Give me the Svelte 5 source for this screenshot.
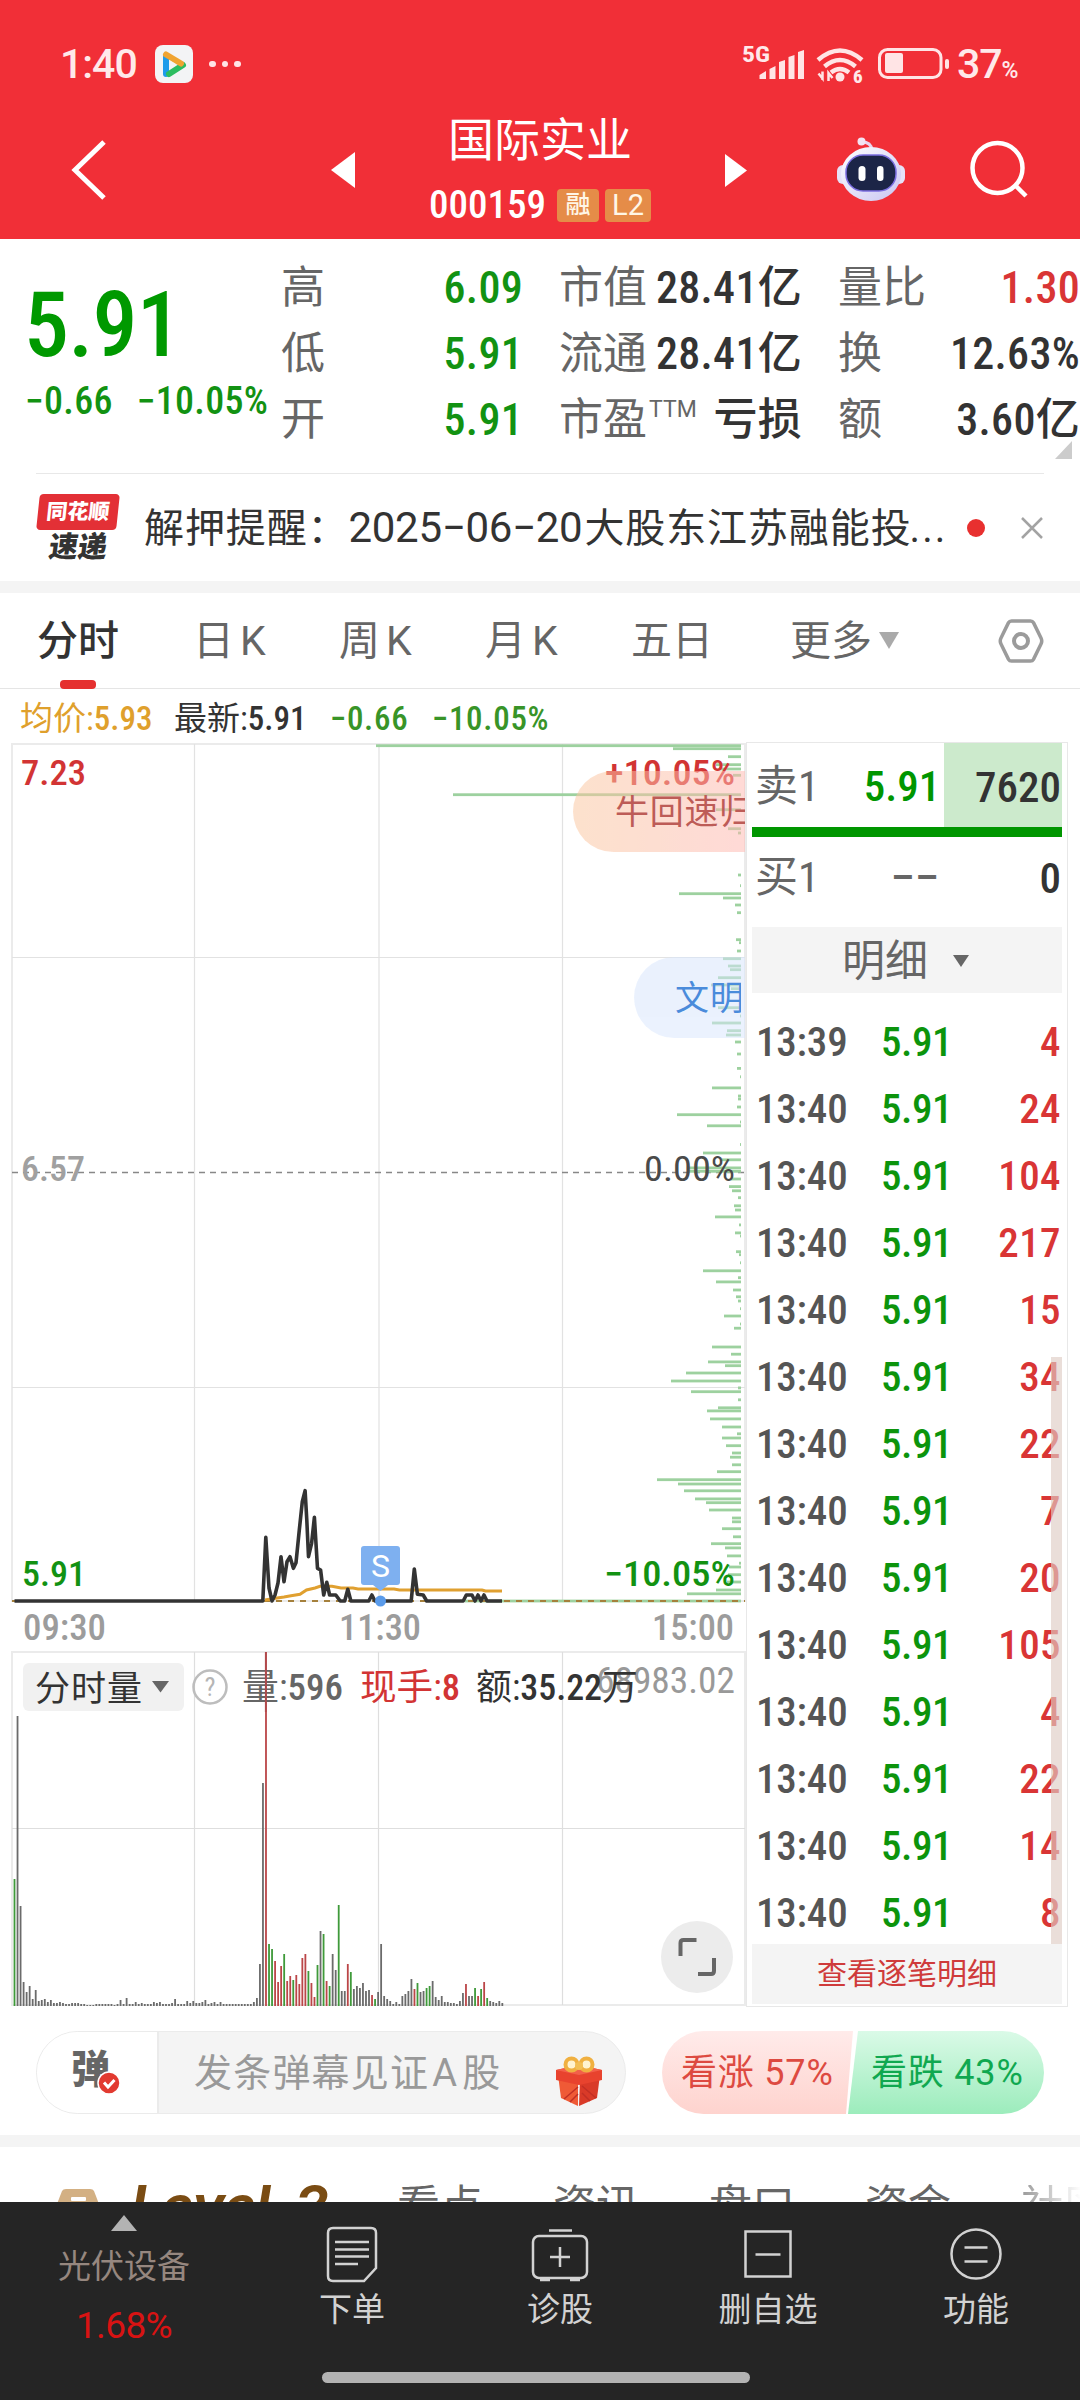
<script>
  const quotes = [
    { label: "高", value: "6.09", tone: "down" },
    { label: "市值", value: "28.41亿" },
    { label: "量比", value: "1.30", tone: "up" },
    { label: "低", value: "5.91", tone: "down" },
    { label: "流通", value: "28.41亿" },
    { label: "换", value: "12.63%" },
    { label: "开", value: "5.91", tone: "down" },
    { label: "市盈", sup: "TTM", value: "亏损" },
    { label: "额", value: "3.60亿" },
  ];

  const periods = ["日K", "周K", "月K", "五日"];

  const ticks = [
    ["13:39", 4],
    ["13:40", 24],
    ["13:40", 104],
    ["13:40", 217],
    ["13:40", 15],
    ["13:40", 34],
    ["13:40", 22],
    ["13:40", 7],
    ["13:40", 20],
    ["13:40", 105],
    ["13:40", 4],
    ["13:40", 22],
    ["13:40", 14],
    ["13:40", 8],
  ];

  // queue depth per price level: [y, length]
  const depth = [
    [745.7, 365], [748.7, 68], [756.7, 13], [764.7, 25], [769, 22], [775.3, 8],
    [794.7, 288], [809.7, 25], [828.7, 13], [833, 3], [875, 3], [885.7, 1],
    [893.7, 62], [898, 18], [905, 6], [912.7, 4], [939.7, 5], [942.7, 2],
    [951, 4], [958.7, 18], [966, 13], [969.7, 11], [977.7, 23], [985, 30],
    [988.7, 10], [1007.7, 23], [1016, 1], [1023, 29], [1030.7, 14], [1035, 15],
    [1042, 6], [1054, 4], [1068.4, 4], [1076.8, 1], [1087.9, 29], [1096, 3],
    [1099, 3], [1107, 4], [1114.7, 64], [1122, 1], [1125.8, 34], [1144.5, 1],
    [1153, 38], [1159.8, 19], [1167.9, 52], [1171.3, 52], [1179, 10], [1186.6, 12],
    [1190.8, 9], [1197.7, 3], [1205.8, 7], [1210, 6], [1216.9, 26], [1224.9, 2],
    [1232.9, 6], [1236, 1], [1251.7, 5], [1254.7, 2], [1262.8, 1], [1270.8, 38],
    [1277.7, 3], [1281.9, 25], [1290, 8], [1296.8, 5], [1301, 3], [1308.7, 1],
    [1316, 17], [1324, 1], [1328.2, 7], [1347, 29], [1354.2, 10], [1361.9, 33],
    [1365.7, 16], [1373, 55], [1381, 70], [1387.9, 3], [1391.7, 50], [1399.8, 3],
    [1407.8, 23], [1410.9, 34], [1418.9, 31], [1427, 19], [1433.8, 4], [1438, 19],
    [1445.7, 15], [1453, 9], [1457.2, 11], [1464.8, 9], [1471.7, 24], [1479.7, 84],
    [1484, 63], [1490.8, 57], [1498.9, 46], [1502.7, 35], [1510, 32], [1518, 9],
    [1521.8, 9], [1528.7, 19], [1536.8, 8], [1543.7, 30], [1547.9, 16], [1555.9, 14],
    [1563.2, 2], [1567, 12], [1574.7, 13], [1582, 14], [1590, 25], [1593.8, 54],
    [1601, 276],
  ];

  const pricePoints =
    "14.5,1601 262.8,1601 265.8,1537.3 269,1588 272,1601 275,1595 278,1583 281,1556.7 284,1581.7 287,1561.7 290,1556.7 293.4,1568.3 296,1562.7 299.3,1530 302.3,1501.7 305.1,1490.7 306.8,1520 308.5,1556.7 311.6,1543.3 314.4,1517.3 317.5,1568.3 320.6,1570 323.7,1595 326.8,1582.3 329.6,1595 335.8,1595 340.2,1601 344.7,1601 347.8,1589.3 350.9,1601 368.8,1601 371.9,1595 375,1601 411.2,1601 414.3,1569 417.4,1594.3 423.2,1595 426.7,1601 463.2,1601 466.3,1595 472,1595 475,1601 478,1595 481,1601 484,1595 487,1601 502,1601";

  const avgPoints =
    "265,1600 275.5,1598.3 284,1597 291,1595.7 300,1594.3 306.5,1590 315,1588 320,1586.3 332,1586.3 341,1588 353,1588 358,1589 394,1589 399.5,1590 482,1590 485.5,1591 502,1591";

  // one bar a minute, g = falling, r = rising
  const volume = (
    "127g 290 100 24 14 20 7 16 5 6 7 4 6 3 3 4 3 2 2 3 3 3 2 2 1 1 1 2 2 2 2 2 2 1 2 6 2 8 2 2 " +
    "4 2 3 2 2 2 4 3 4 2 2 2 3 7 2 2 2 5 3 5 3 3 4 6 2 3 4 2 4 2 2 2 2 2 2 2 2 2 2 4 8 " +
    "42 223 354r 62g 57g 45r 24r 40r 52g 25r 30r 26g 31r 22r 48r 52r 35g 23r 9r 41g 75 72g 25r 20g 52 36 101g 15 15 " +
    "42r 34g 17 20 18 23 15 16 11r 7g 14 62 10 7 5 2 4 2 10 12 15 27 17r 23g 14 15 18g 20g 25 9 6 10 4 4 3 3 2 5 13 " +
    "22r 10 10 18g 10r 17g 24r 8g 5 4 3 5 3"
  )
    .split(" ")
    .map((item, i) => ({
      x: 14.5 + i * 3.03,
      h: parseInt(item),
      fill: item.endsWith("g") ? "#3f9a3a" : item.endsWith("r") ? "#bb4648" : "#6b6b6b",
    }));
</script>

<div class="page">
  <header>
    <div class="status">
      <span class="clock">1:40</span>
      <svg class="app-icon" viewBox="0 0 38 38">
        <rect width="38" height="38" rx="8" fill="#f3f4f5" />
        <path d="M11 12v17" stroke="#1e9bea" stroke-width="6" stroke-linecap="round" />
        <path d="M14 29l14-9" stroke="#2cbd60" stroke-width="6" stroke-linecap="round" />
        <path d="M11 9.500l15 9" stroke="#f0a431" stroke-width="6" stroke-linecap="round" />
        <path d="M14 15l7 4.500-7 4.500z" fill="#f3f4f5" />
      </svg>
      <span class="dots"><i></i><i></i><i></i></span>
      <svg class="signals" viewBox="740 42 212 44">
        <text x="742" y="61.500" font-size="22" font-weight="700" fill="#ffe9ea" textLength="28" lengthAdjust="spacingAndGlyphs">5G</text>
        <g fill="#ffe4e5">
          <path d="M759.500 79v-4l6.500-4v8zM769.500 79V69l6-3v13zM779 79V62l6-2v19zM788.500 79V57l6-2v24zM798 79V52l6-2v29z" />
          <circle cx="840" cy="77" r="4.500" />
          <rect x="885" y="53" width="18" height="20" rx="2" />
          <rect x="945" y="59" width="4" height="10" rx="2" />
        </g>
        <g fill="none" stroke="#ffe4e5" stroke-width="4.500">
          <path d="M818 60q22-19 44 0M824.500 66.500q15.500-13 31 0M831 72.500q9-7 18 0" />
          <rect x="879.500" y="49.500" width="61.500" height="28" rx="8" stroke-width="3" />
        </g>
        <path d="M818.500 73.500l4 5v-7M822.500 80v-8M828.500 81v-8l4 5" stroke="#ffe4e5" stroke-width="2.500" fill="none" />
        <text x="853" y="82.500" font-size="19" font-weight="800" fill="#ffe9ea">6</text>
      </svg>
      <span class="battery">37<small>%</small></span>
    </div>

    <div class="title-bar">
      <svg class="back" viewBox="0 0 36 62"><path d="M33 3L4 31l29 28" fill="none" stroke="#fff" stroke-width="5" /></svg>
      <svg class="prev" viewBox="0 0 24 36"><path d="M24 0v36L0 18z" fill="#fff" /></svg>
      <div class="stock">
        <h1>国际实业</h1>
        <div class="code"><b>000159</b><em class="tag">融</em><em class="tag l2">L2</em></div>
      </div>
      <svg class="next" viewBox="0 0 24 36"><path d="M0 0v36l24-18z" fill="#fff" /></svg>
      <svg class="robot" viewBox="0 0 68 64">
        <defs>
          <linearGradient id="shell" x1="0" y1="0" x2="1" y2="1">
            <stop offset="0" stop-color="#fff" />
            <stop offset="1" stop-color="#c9c5f2" />
          </linearGradient>
        </defs>
        <path d="M25 5q9 0 10 8" fill="none" stroke="#e9d5ee" stroke-width="3" />
        <circle cx="24.500" cy="4.500" r="4" fill="#f3e3f2" />
        <rect x="0" y="28" width="68" height="19" rx="6" fill="#e6e2f8" />
        <ellipse cx="34" cy="37" rx="30" ry="27" fill="url(#shell)" />
        <rect x="9" y="18" width="50" height="36" rx="17" fill="#1c2547" stroke="#7b6ee0" stroke-width="1.500" />
        <rect x="21.500" y="29" width="7" height="15" rx="3.500" fill="#fff" />
        <rect x="40" y="29" width="6.500" height="15" rx="3.200" fill="#fff" />
      </svg>
      <svg class="search" viewBox="0 0 60 60">
        <circle cx="27.500" cy="28" r="25" fill="none" stroke="#fff" stroke-width="4.500" />
        <path d="M45 45l11 11" stroke="#fff" stroke-width="4.500" />
      </svg>
    </div>
  </header>

  <section class="quote">
    <div class="price">
      <strong>5.91</strong>
      <div class="change"><span>−0.66</span><span>−10.05%</span></div>
    </div>
    <dl>
      {#each quotes as q}
        <div class="cell">
          <dt>{q.label}{#if q.sup}<sup>{q.sup}</sup>{/if}</dt>
          <dd class={q.tone}>{q.value}</dd>
        </div>
      {/each}
    </dl>
    <i class="corner"></i>
  </section>

  <section class="news">
    <div class="news-logo">
      <span class="brand">同花顺</span>
      <span class="express">速递</span>
    </div>
    <p>解押提醒：<span>2025−06−20</span>大股东江苏融能投<span class="more">...</span></p>
    <i class="unread"></i>
    <svg class="close" viewBox="0 0 22 22"><path d="M1 1l20 20M21 1L1 21" stroke="#a3a3a3" stroke-width="2.500" /></svg>
  </section>

  <nav class="periods">
    <span class="active">分时</span>
    {#each periods as p}
      <span class:k={p.endsWith("K")}>{p}</span>
    {/each}
    <span class="drop">更多<i></i></span>
    <svg viewBox="0 0 46 46">
      <path d="M13.500 3h19q2 0 3 1.700L43 20q1.500 3 0 6l-7.500 15.300q-1 1.700-3 1.700h-19q-2 0-3-1.700L3 26q-1.500-3 0-6l7.500-15.300Q11.500 3 13.500 3z" fill="none" stroke="#9b9b9b" stroke-width="3.500" />
      <circle cx="23" cy="23" r="7" fill="none" stroke="#9b9b9b" stroke-width="4" />
    </svg>
  </nav>

  <div class="summary">
    <span class="avg">均价:<b>5.93</b></span>
    <span class="last">最新:<b>5.91</b></span>
    <b class="fall">−0.66</b>
    <b class="fall">−10.05%</b>
  </div>

  <main>
    <svg class="chart" viewBox="0 742 746 1265" width="746" height="1265">
      <defs>
        <linearGradient id="warm" x1="0" x2="1">
          <stop offset="0" stop-color="#fbc7a0" />
          <stop offset="1" stop-color="#ffb9b2" />
        </linearGradient>
      </defs>
      <g fill="none" stroke="#ebebeb" stroke-width="2">
        <rect x="12" y="744" width="733" height="857" />
        <rect x="12" y="1652" width="733" height="353" />
        <path d="M194.500 744v857M379 744v857M562.500 744v857M12 957.500h733M12 1387.500h733" stroke="#e2e2e2" stroke-width="1.200" />
        <path d="M194.500 1652v353M378.500 1652v353M562.500 1652v353M12 1828.500h733" stroke="#dedede" stroke-width="1.200" />
      </g>
      <path d="M12 1172.500h733" stroke="#888" stroke-width="1.600" stroke-dasharray="6 5" />

      {#each depth as [y, len]}
        <rect x={741 - len} y={y - 1.4} width={len} height="2.800" fill="#9dd19f" />
      {/each}
      <path d="M12 1601h733" stroke="#a5803c" stroke-width="1.800" stroke-dasharray="6 6" />

      <polyline points={avgPoints} fill="none" stroke="#e0a030" stroke-width="3" />
      <polyline points={pricePoints} fill="none" stroke="#333" stroke-width="3.600" stroke-linejoin="round" />

      <g font-size="35" font-weight="500">
        <text x="21" y="785" fill="#d23434" textLength="65" lengthAdjust="spacingAndGlyphs">7.23</text>
        <text x="605" y="785" fill="#d23434" textLength="130" lengthAdjust="spacingAndGlyphs">+10.05%</text>
        <text x="21" y="1181" fill="#a0a0a0" textLength="64" lengthAdjust="spacingAndGlyphs">6.57</text>
        <text x="644" y="1181" fill="#4a4a4a" font-weight="400" textLength="91" lengthAdjust="spacingAndGlyphs">0.00%</text>
        <text x="22" y="1586" fill="#129212" textLength="64" lengthAdjust="spacingAndGlyphs">5.91</text>
        <text x="604" y="1586" fill="#129212" textLength="131" lengthAdjust="spacingAndGlyphs">−10.05%</text>
      </g>
      <g font-size="36" fill="#9c9c9c" font-weight="500">
        <text x="23" y="1640" textLength="83" lengthAdjust="spacingAndGlyphs">09:30</text>
        <text x="339" y="1640" textLength="82" lengthAdjust="spacingAndGlyphs">11:30</text>
        <text x="652" y="1640" textLength="82" lengthAdjust="spacingAndGlyphs">15:00</text>
      </g>

      <g opacity="0.52">
        <path d="M745 771H613.500a40.500 40.500 0 0 0 0 81H745z" fill="url(#warm)" />
        <path d="M745 957H674.500a40.500 40.500 0 0 0 0 81H745z" fill="#d8e6fd" />
      </g>
      <svg x="573" y="742" width="172" height="300" viewBox="573 742 172 300">
        <text class="cn" x="615" y="824" font-size="34" fill="#bd5c57" letter-spacing=".7">牛回速归</text>
      </svg>
      <svg x="573" y="940" width="168" height="100" viewBox="573 940 168 100">
        <text class="cn" x="675" y="1010" font-size="34" fill="#4a8bdb" letter-spacing="1">文明</text>
      </svg>

      <rect x="361" y="1546" width="39" height="39" rx="3" fill="#7eb0f0" />
      <path d="M373 1585h15l-7.500 6z" fill="#7eb0f0" />
      <text class="wide" x="380.500" y="1577" text-anchor="middle" font-size="32" fill="#fff">S</text>
      <circle cx="380.500" cy="1601" r="5.500" fill="#5a9bea" />

      {#each volume as bar}
        <rect x={bar.x - 0.9} y={2006 - bar.h} width="1.800" height={bar.h} fill={bar.fill} />
      {/each}

      <rect x="23" y="1663" width="161" height="48" rx="6" fill="#f1f1f1" />
      <text class="cn" x="35" y="1701" font-size="35" fill="#333" textLength="107">分时量</text>
      <path d="M152 1681h17l-8.500 11.500z" fill="#666" />
      <circle cx="210" cy="1687" r="16.500" fill="none" stroke="#bdbdbd" stroke-width="2.500" />
      <text x="210" y="1696" text-anchor="middle" font-size="26" fill="#b5b5b5">?</text>
      <g font-size="36">
        <text x="596" y="1693" fill="#999" textLength="139" lengthAdjust="spacingAndGlyphs">68983.02</text>
        <text x="242" y="1700" fill="#666" textLength="101" lengthAdjust="spacingAndGlyphs">量:<tspan font-weight="500">596</tspan></text>
        <text x="360" y="1700" fill="#d23434" textLength="100" lengthAdjust="spacingAndGlyphs">现手:<tspan font-weight="500">8</tspan></text>
        <text x="476" y="1700" fill="#333" textLength="162" lengthAdjust="spacingAndGlyphs">额:<tspan font-weight="500">35.22</tspan>万</text>
      </g>
      <path d="M265.800 1652v60" stroke="#b04a4c" stroke-width="1.800" />

      <circle cx="697" cy="1957" r="36" fill="#ececec" />
      <path d="M680.500 1956v-13q0-3 3-3h13M714 1958v13q0 3-3 3h-13" fill="none" stroke="#666" stroke-width="4" />
    </svg>

    <aside>
      <div class="level sell">
        <span>卖1</span><b>5.91</b><em>7620</em>
      </div>
      <div class="ratio"></div>
      <div class="level buy">
        <span>买1</span><b class="none">−−</b><em>0</em>
      </div>
      <div class="detail-head">明细<i></i></div>
      <ul>
        {#each ticks as [time, qty]}
          <li><span>{time}</span><b>5.91</b><em>{qty}</em></li>
        {/each}
        <i class="thumb"></i>
      </ul>
      <div class="detail-link">查看逐笔明细</div>
    </aside>
  </main>

  <section class="talk">
    <div class="bullet">
      <span class="toggle">弹
        <svg viewBox="0 0 24 24">
          <circle cx="12" cy="12" r="11" fill="#e23a30" stroke="#fff" stroke-width="1.500" />
          <path d="M7 11.500l4 4.500 6.500-7" fill="none" stroke="#fff" stroke-width="3" />
        </svg>
      </span>
      <span class="hint">发条弹幕见证<i>A</i>股</span>
      <svg class="gift" viewBox="0 0 46 50">
        <path d="M2 19l20 6v25L5 42z" fill="#ef5a36" />
        <path d="M44 19l-20 6-1 25 18-8z" fill="#d93a28" />
        <path d="M0 14l23-5 23 5v10l-23 5-23-5z" fill="#e8432e" />
        <path d="M0 14l23-5 23 5-23 5z" fill="#f2604a" />
        <path d="M8 43l14-12M14 46l8-8M40 42L26 30M34 45l-8-8" stroke="#c22f24" stroke-width="1.500" />
        <circle cx="15.500" cy="8.500" r="6" fill="#fff3d0" stroke="#f0b040" stroke-width="4" />
        <circle cx="30.500" cy="8.500" r="6" fill="#fff3d0" stroke="#f0b040" stroke-width="4" />
        <circle cx="23" cy="10" r="4" fill="#f3bf55" />
      </svg>
    </div>
    <div class="poll">
      <span class="bull">看涨 57%</span>
      <span class="bear">看跌 43%</span>
    </div>
  </section>

  <nav class="sections">
    <svg viewBox="0 0 42 40"><path d="M9 1h24q3 0 4 2l5 13v24H0V16L5 3q1-2 4-2z" fill="#d3b083" /><rect x="14" y="9" width="15" height="4" rx="1" fill="#fff" /></svg>
    <strong>Level-2</strong>
    <span>看点</span>
    <span>资讯</span>
    <span>盘口</span>
    <span>资金</span>
    <span class="faded">社区</span>
  </nav>

  <footer>
    <div class="tabs">
      <div class="sector">
        <i></i>
        <span>光伏设备</span>
        <b>1.68%</b>
      </div>
      <div class="tab">
        <svg viewBox="0 0 60 60">
          <path d="M11 3h38q5 0 5 5v35L42 56H11q-5 0-5-5V8q0-5 5-5z" />
          <path d="M13 17h34M13 24.500h34M13 31.500h34M13 39h23" />
        </svg>
        <span>下单</span>
      </div>
      <div class="tab">
        <svg viewBox="0 0 60 60">
          <rect x="3" y="11" width="54" height="42" rx="6" />
          <path d="M19 5.500h23M30 22v20M20 32h20M10 55h10M40 55h10" />
        </svg>
        <span>诊股</span>
      </div>
      <div class="tab">
        <svg viewBox="0 0 60 60">
          <rect x="7.500" y="6.500" width="45" height="45" />
          <path d="M17.500 29.500h25" />
        </svg>
        <span>删自选</span>
      </div>
      <div class="tab">
        <svg viewBox="0 0 60 60">
          <circle cx="30" cy="29" r="24.500" />
          <path d="M18.500 22.500h23M18.500 36.500h23" />
        </svg>
        <span>功能</span>
      </div>
    </div>
    <i class="home"></i>
  </footer>
</div>

<style>
  :global(body) {
    margin: 0;
    background: #fff;
  }

  .page {
    display: flex;
    flex-direction: column;
    width: 1080px;
    height: 2400px;
    overflow: hidden;
    background: #fff;
    color: #333;
    font-family: Roboto, "Noto Sans CJK SC", sans-serif;
    font-stretch: 87.5%;
    line-height: 1;
  }

  .page * {
    box-sizing: border-box;
  }

  em,
  i {
    font-style: normal;
  }

  svg {
    display: block;
    flex: none;
  }

  header {
    flex: none;
    height: 239px;
    background: #f12f37;
    color: #fff;
  }

  .status {
    display: flex;
    align-items: center;
    height: 96px;
    padding: 32px 61px 0 60px;
    color: #ffe9ea;
  }

  .clock {
    width: 95px;
    font-size: 41px;
    font-weight: 500;
    font-stretch: 100%;
    letter-spacing: -1px;
  }

  .app-icon {
    width: 38px;
    height: 38px;
  }

  .dots {
    display: flex;
    gap: 6px;
    margin-left: 16px;
  }

  .dots i {
    width: 6.500px;
    height: 6.500px;
    border-radius: 50%;
    background: #ffe4e5;
  }

  .signals {
    width: 212px;
    height: 44px;
    margin-left: auto;
  }

  .battery {
    width: 67px;
    padding-left: 5px;
    font-size: 41px;
    font-weight: 500;
    font-stretch: 100%;
    letter-spacing: -1px;
    white-space: nowrap;
  }

  .battery small {
    font-size: 23px;
    font-weight: 500;
  }

  .title-bar {
    display: flex;
    align-items: center;
    height: 143px;
    padding-left: 71px;
  }

  .back {
    width: 36px;
    height: 62px;
    margin-top: 4px;
  }

  .prev {
    width: 24px;
    height: 36px;
    margin: 5px 0 0 224px;
  }

  .stock {
    width: 370px;
    padding-top: 3px;
    text-align: center;
  }

  h1 {
    margin: 0 0 26px;
    font-size: 46px;
    font-weight: 400;
  }

  .code {
    display: flex;
    justify-content: center;
    align-items: center;
    gap: 6px;
    height: 33px;
  }

  .code b {
    margin-right: 5px;
    font-size: 39px;
    font-weight: 500;
  }

  .tag {
    width: 42px;
    height: 33px;
    border-radius: 4px;
    background: #e58c48;
    color: #fff6e6;
    font-size: 25px;
    font-weight: 500;
    line-height: 32px;
  }

  .l2 {
    width: 46px;
    font-size: 29px;
    font-stretch: 100%;
    font-weight: 400;
  }

  .next {
    width: 22px;
    height: 35px;
    margin-top: 5px;
  }

  .robot {
    width: 68px;
    height: 64px;
    margin: 3px 0 0 90px;
  }

  .search {
    width: 60px;
    height: 60px;
    margin: 4px 0 0 65px;
  }

  .quote {
    position: relative;
    display: flex;
    flex: none;
    height: 235px;
    padding-top: 16px;
  }

  .quote::after {
    content: "";
    position: absolute;
    left: 36px;
    right: 36px;
    bottom: 0;
    height: 1px;
    background: #e8e8e8;
  }

  .price {
    width: 281px;
    padding: 26px 0 0 24px;
    color: #009900;
  }

  .price strong {
    display: block;
    font-size: 90px;
    font-weight: 500;
    letter-spacing: -0.8px;
  }

  .change {
    display: flex;
    gap: 24px;
    margin: 11px 0 0 1px;
    font-size: 38px;
    font-weight: 500;
    letter-spacing: 0.3px;
    color: #129212;
    white-space: nowrap;
  }

  dl {
    display: grid;
    grid-template-columns: 242px 243px 242px;
    grid-auto-rows: 66px;
    column-gap: 36px;
    width: 799px;
    margin: 0;
  }

  .cell {
    display: flex;
    align-items: center;
    justify-content: space-between;
    white-space: nowrap;
  }

  dt {
    font-size: 44px;
    color: #666;
    font-weight: 400;
  }

  sup {
    font-size: 23px;
    font-stretch: 100%;
    vertical-align: 18px;
    line-height: 0;
    margin-left: 2px;
  }

  dd {
    margin: 0;
    font-size: 44px;
    font-weight: 500;
    letter-spacing: 0.3px;
  }

  .down {
    color: #129212;
  }

  .up {
    color: #d93535;
  }

  .corner {
    position: absolute;
    right: 8px;
    bottom: 15px;
    border-left: 17px solid transparent;
    border-bottom: 18px solid #ccc;
  }

  .news {
    display: flex;
    align-items: center;
    flex: none;
    height: 107px;
    padding: 0 37px;
  }

  .news-logo {
    display: flex;
    flex-direction: column;
    align-items: center;
    width: 82px;
    font-weight: 900;
  }

  .brand {
    width: 80px;
    height: 36px;
    border-radius: 4px;
    background: #e33036;
    color: #fff;
    font-size: 21px;
    line-height: 36px;
    text-align: center;
    transform: skewX(-6deg);
  }

  .express {
    margin-top: 3px;
    font-size: 29px;
    transform: skewX(-8deg);
  }

  .news p {
    width: 806px;
    margin: 0 0 0 25px;
    font-size: 40px;
    letter-spacing: 0.9px;
    white-space: nowrap;
  }

  .news p span {
    margin-right: 2px;
    font-size: 42px;
    font-stretch: 100%;
    letter-spacing: -0.3px;
  }

  .news p .more {
    margin: 0 0 0 -2px;
    font-size: 40px;
    letter-spacing: 2px;
  }

  .unread {
    width: 18px;
    height: 18px;
    margin-left: 17px;
    border-radius: 50%;
    background: #e8302f;
  }

  .close {
    width: 22px;
    height: 22px;
    margin-left: auto;
  }

  .periods {
    display: flex;
    align-items: center;
    flex: none;
    height: 108px;
    border-top: 12px solid #f4f4f4;
    border-bottom: 1px solid #e5e5e5;
    padding: 1px 36px 0 37px;
    font-size: 41px;
    color: #666;
  }

  .periods span {
    position: relative;
    width: 159px;
    white-space: nowrap;
  }

  .periods .k {
    width: 146px;
    font-stretch: 100%;
    letter-spacing: 6px;
  }

  .periods .active {
    width: 156px;
    color: #333;
    font-weight: 500;
  }

  .active::after {
    content: "";
    position: absolute;
    left: 23px;
    bottom: -27px;
    width: 36px;
    height: 9px;
    border-radius: 4px;
    background: #e5302f;
  }

  .drop i {
    display: inline-block;
    margin-left: 7px;
    vertical-align: 6px;
    border: 10.500px solid transparent;
    border-top: 17px solid #aaa;
    border-bottom: 0;
  }

  .periods svg {
    width: 46px;
    height: 46px;
    margin-left: auto;
  }

  .summary {
    display: flex;
    align-items: center;
    flex: none;
    height: 53px;
    padding: 6px 0 0 20px;
    font-size: 33px;
  }

  .summary b {
    font-weight: 500;
  }

  .summary span {
    width: 154px;
  }

  .avg {
    color: #dfa02c;
  }

  .fall {
    width: 102px;
    padding-left: 2px;
    color: #389428;
    letter-spacing: 0.7px;
    white-space: nowrap;
  }

  main {
    display: flex;
    flex: none;
    height: 1265px;
  }

  .chart .cn {
    font-family: "Noto Sans CJK SC", sans-serif;
  }

  .wide {
    font-stretch: 100%;
  }

  aside {
    display: flex;
    flex-direction: column;
    width: 322px;
    padding: 0 5px;
    border: 1px solid #e8e8e8;
  }

  .level {
    display: flex;
    align-items: center;
    height: 84px;
    padding-top: 3px;
    font-size: 43px;
  }

  .level span {
    width: 108px;
    padding-left: 3px;
    color: #666;
  }

  .level b {
    width: 84px;
    font-weight: 500;
    color: #009600;
    text-align: center;
  }

  .level em {
    flex: 1;
    align-self: stretch;
    margin-top: -3px;
    padding-right: 1px;
    font-weight: 500;
    line-height: 88px;
    text-align: right;
  }

  .sell em {
    background: #cceacc;
  }

  .level .none {
    color: #666;
    width: 70px;
    margin: 0 -6px 0 20px;
    font-stretch: 100%;
    white-space: nowrap;
  }

  .buy {
    height: 90px;
    padding-bottom: 12px;
  }

  .buy em {
    line-height: 82px;
  }

  .ratio {
    height: 10px;
    background: #009600;
  }

  .detail-head {
    display: flex;
    align-items: center;
    justify-content: center;
    gap: 25px;
    height: 66px;
    padding: 2px 3px 0 0;
    background: #f4f4f4;
    font-size: 43px;
    color: #666;
  }

  .detail-head i {
    border: 8px solid transparent;
    border-top: 12px solid #666;
    border-bottom: 0;
  }

  ul {
    position: relative;
    margin: 0;
    padding: 16.500px 1px 0 4px;
    height: 951px;
    list-style: none;
  }

  li {
    display: flex;
    align-items: center;
    height: 66.950px;
    font-size: 41px;
    font-weight: 500;
  }

  li span {
    width: 125px;
    color: #555;
    letter-spacing: -0.2px;
  }

  li b {
    font-weight: 500;
    color: #0c940c;
    letter-spacing: -0.5px;
  }

  li em {
    margin-left: auto;
    color: #d93535;
    letter-spacing: 0.4px;
  }

  .thumb {
    position: absolute;
    right: 0;
    top: 364px;
    bottom: 0;
    width: 11px;
    background: rgba(222, 204, 196, 0.65);
  }

  .detail-link {
    height: 60px;
    background: #f4f4f4;
    color: #cf3b3b;
    font-size: 30px;
    line-height: 60px;
    text-align: center;
  }

  .talk {
    display: flex;
    flex: none;
    justify-content: space-between;
    height: 128px;
    padding: 24px 36px 0;
  }

  .bullet {
    display: flex;
    align-items: center;
    width: 590px;
    height: 83px;
    border: 1px solid #ebebeb;
    border-radius: 42px;
    background: #f4f4f4;
    overflow: hidden;
  }

  .toggle {
    position: relative;
    flex: none;
    width: 122px;
    height: 83px;
    padding-left: 34px;
    border-right: 2px solid #ebebeb;
    background: #fff;
    color: #666;
    font-size: 39px;
    font-weight: 900;
    line-height: 78px;
  }

  .toggle svg {
    position: absolute;
    left: 60px;
    top: 40px;
    width: 24px;
    height: 24px;
  }

  .hint {
    flex: none;
    width: 397px;
    padding-left: 35px;
    font-size: 38px;
    letter-spacing: 1.2px;
    color: #999;
    white-space: nowrap;
  }

  .hint i {
    margin: 0 4px 0 3px;
    font-stretch: 100%;
  }

  .gift {
    width: 46px;
    height: 50px;
    margin-top: 17px;
  }

  .poll {
    display: flex;
    width: 382px;
    height: 83px;
    font-size: 36px;
    font-stretch: 100%;
    letter-spacing: 0.8px;
    line-height: 84px;
    white-space: nowrap;
    border-radius: 42px;
    overflow: hidden;
  }

  .poll span {
    width: 193px;
    height: 83px;
    padding-left: 19px;
  }

  .bull {
    background: linear-gradient(#ffebea, #fed3ce);
    color: #dd4a41;
    clip-path: polygon(0 0, 100% 0, 184px 100%, 0 100%);
  }

  .poll .bear {
    width: 198px;
    margin-left: -5px;
    padding-left: 23px;
    background: linear-gradient(#dafae7, #9cecbc);
    color: #10a850;
    clip-path: polygon(10px 0, 100% 0, 100% 100%, 0 100%);
  }

  .sections {
    display: flex;
    flex: none;
    height: 67px;
    border-top: 12px solid #f4f4f4;
    padding: 38px 0 0 57px;
    overflow: hidden;
    font-size: 43px;
    color: #666;
    white-space: nowrap;
  }

  .sections svg {
    width: 42px;
    height: 40px;
    margin-top: 3px;
  }

  .sections strong {
    flex: none;
    width: 266px;
    margin: -7px 0 0 32px;
    font: italic 700 54px/54px Inter, sans-serif;
    color: #7a4c13;
  }

  .sections span {
    width: 156px;
    flex: none;
  }

  .sections .faded {
    background: linear-gradient(90deg, #999, #fff 60px);
    background-clip: text;
    color: transparent;
  }

  footer {
    flex: 1;
    background: #252525;
  }

  .tabs {
    display: flex;
    height: 170px;
    color: #d2d2d2;
    font-size: 33px;
  }

  .sector {
    display: flex;
    flex-direction: column;
    align-items: center;
    width: 248px;
    padding-top: 13px;
  }

  .sector i {
    border: 13.500px solid transparent;
    border-bottom: 16px solid #b3b3b3;
    border-top: 0;
  }

  .sector span {
    margin-top: 19px;
    color: #96877f;
  }

  .sector b {
    margin-top: 24px;
    color: #d81313;
    font-size: 37px;
    font-stretch: 100%;
    font-weight: 400;
    letter-spacing: -0.6px;
  }

  .tab {
    display: flex;
    flex-direction: column;
    align-items: center;
    width: 208px;
    padding-top: 23px;
  }

  .tab svg {
    width: 60px;
    height: 60px;
    margin-bottom: 8px;
    fill: none;
    stroke: #d2d2d2;
    stroke-width: 2.500;
  }

  .home {
    display: block;
    width: 428px;
    height: 11px;
    margin: 0 auto;
    border-radius: 6px;
    background: #b3b3b3;
    transform: translateX(-4px);
  }
</style>
